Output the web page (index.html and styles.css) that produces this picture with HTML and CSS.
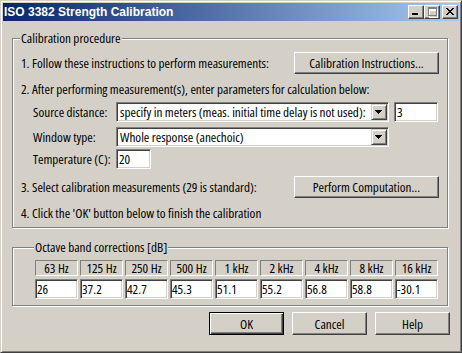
FILE: index.html
```html
<!DOCTYPE html>
<html>
<head>
<meta charset="utf-8">
<title>ISO 3382 Strength Calibration</title>
<link rel="stylesheet" href="styles.css">
</head>
<body>
<div class="window">
  <div class="titlebar">
    <span class="title">ISO 3382 Strength Calibration</span>
    <div class="caps">
      <span class="cap"><svg width="14" height="12" viewBox="0 0 14 12" shape-rendering="crispEdges"><rect x="3" y="7" width="6" height="2" fill="#000"/></svg></span>
      <span class="cap"><svg width="14" height="12" viewBox="0 0 14 12" shape-rendering="crispEdges"><path d="M4 3h9v9h-9z M5 5v6h7v-6z" fill="#fff" fill-rule="evenodd"/><path d="M3 1h9v9h-9z M4 3v6h7v-6z" fill="#808080" fill-rule="evenodd"/></svg></span>
      <span class="cap close"><svg width="14" height="12" viewBox="0 0 14 12" shape-rendering="crispEdges"><path transform="translate(3 2)" d="M0 0h2v1h-2z M6 0h2v1h-2z M1 1h2v1h-2z M5 1h2v1h-2z M2 2h4v1h-4z M3 3h2v1h-2z M2 4h4v1h-4z M1 5h2v1h-2z M5 5h2v1h-2z M0 6h2v1h-2z M6 6h2v1h-2z" fill="#000"/></svg></span>
    </div>
  </div>
  <div class="client">
    <fieldset class="group g1">
      <legend>Calibration procedure</legend>
      <div class="row r-btn first">
        <span>1. Follow these instructions to perform measurements:</span>
        <button class="btn wide">Calibration Instructions...</button>
      </div>
      <div class="row r-text">2. After performing measurement(s), enter parameters for calculation below:</div>
      <div class="field f-src">
        <span class="lbl">Source distance:</span>
        <div class="combo">
          <span class="ctext">specify in meters (meas. initial time delay is not used):</span>
          <span class="arrow"><svg width="14" height="14" viewBox="0 0 14 14" shape-rendering="crispEdges"><path d="M3 5h7v1h-1v1h-1v1h-1v1h-1v-1h-1v-1h-1v-1h-1z" fill="#000"/></svg></span>
        </div>
        <div class="edit e-dist">3</div>
      </div>
      <div class="field f-win">
        <span class="lbl">Window type:</span>
        <div class="combo">
          <span class="ctext">Whole response (anechoic)</span>
          <span class="arrow"><svg width="14" height="14" viewBox="0 0 14 14" shape-rendering="crispEdges"><path d="M3 5h7v1h-1v1h-1v1h-1v1h-1v-1h-1v-1h-1v-1h-1z" fill="#000"/></svg></span>
        </div>
      </div>
      <div class="field f-temp">
        <span class="lbl">Temperature (C):</span>
        <div class="edit e-temp">20</div>
      </div>
      <div class="row r-btn">
        <span>3. Select calibration measurements (29 is standard):</span>
        <button class="btn wide">Perform Computation...</button>
      </div>
      <div class="row r-text">4. Click the 'OK' button below to finish the calibration</div>
    </fieldset>
    <fieldset class="group g2">
      <legend>Octave band corrections [dB]</legend>
      <div class="bands heads">
        <span class="head">63 Hz</span>
        <span class="head">125 Hz</span>
        <span class="head">250 Hz</span>
        <span class="head">500 Hz</span>
        <span class="head">1 kHz</span>
        <span class="head">2 kHz</span>
        <span class="head">4 kHz</span>
        <span class="head">8 kHz</span>
        <span class="head">16 kHz</span>
      </div>
      <div class="bands vals">
        <div class="edit">26</div>
        <div class="edit">37.2</div>
        <div class="edit">42.7</div>
        <div class="edit">45.3</div>
        <div class="edit">51.1</div>
        <div class="edit">55.2</div>
        <div class="edit">56.8</div>
        <div class="edit">58.8</div>
        <div class="edit">-30.1</div>
      </div>
    </fieldset>
    <div class="actions">
      <button class="btn dlg default">OK</button>
      <button class="btn dlg">Cancel</button>
      <button class="btn dlg">Help</button>
    </div>
  </div>
</div>
</body>
</html>
```

FILE: styles.css
```css
* { box-sizing: border-box; }

body {
  margin: 0;
  background: #d4d0c8;
  font-family: "Open Sans", "Liberation Sans", sans-serif;
  font-stretch: 75%;
  font-size: 13.2px;
  color: #000;
}

.window {
  width: 462px;
  height: 353px;
  background: #d4d0c8;
  border: 1px solid;
  border-color: #d4d0c8 #404040 #404040 #d4d0c8;
  box-shadow: inset 1px 1px #fff, inset -1px -1px #808080;
  padding: 2px;
  display: flex;
  flex-direction: column;
}

.titlebar {
  height: 18px;
  flex: none;
  display: flex;
  align-items: center;
  padding: 0 1px 0 1px;
  background: linear-gradient(to right, #0a246a, #a6caf0);
}

.title {
  flex: 1;
  color: #fff;
  font-family: "Liberation Sans", Arial, sans-serif;
  font-stretch: normal;
  font-weight: bold;
  font-size: 12px;
  white-space: nowrap;
}

.caps {
  display: flex;
  align-items: center;
}

.cap {
  width: 16px;
  height: 14px;
  background: #d4d0c8;
  border: 1px solid;
  border-color: #fff #404040 #404040 #fff;
  box-shadow: inset -1px -1px #808080, inset 1px 1px #d4d0c8;
  display: block;
}

.cap svg { display: block; }

.cap.close { margin-left: 2px; }

.client {
  flex: 1;
  padding: 0 9px;
  display: flex;
  flex-direction: column;
}

.group {
  margin: 10px 0 0 0;
  width: 436px;
  min-width: 0;
  border: 1px solid #808080;
  box-shadow: inset 1px 1px #fff, 1px 1px #fff;
}

.group legend {
  padding: 0 1px;
  margin-left: -1px;
  line-height: 14px;
  background: #d4d0c8;
}

.g1 { padding: 0 8px 6px 8px; }

.g2 {
  margin-top: 12px;
  padding: 0 8px 6px 22px;
}

.row {
  display: flex;
  align-items: center;
  white-space: nowrap;
}

.r-btn {
  height: 22px;
  margin-top: 7px;
  justify-content: space-between;
}

.r-text {
  height: 16px;
  line-height: 16px;
  margin-top: 7px;
}

.btn {
  font: inherit;
  color: #000;
  background: #d4d0c8;
  border: 1px solid;
  border-color: #fff #404040 #404040 #fff;
  box-shadow: inset -1px -1px #808080, inset 1px 1px #d4d0c8;
  padding: 0;
  display: flex;
  align-items: center;
  justify-content: center;
}

.btn.wide {
  width: 145px;
  height: 22px;
}

.btn.dlg {
  width: 75px;
  height: 23px;
}

.btn.default {
  border-color: #000;
  box-shadow: inset 1px 1px #fff, inset -1px -1px #404040, inset -2px -2px #808080;
}

.field {
  display: flex;
  align-items: center;
  height: 20px;
  padding-left: 12px;
  white-space: nowrap;
}

.f-src { margin-top: 5px; }
.f-win { margin-top: 5px; }
.f-temp { margin-top: 2px; }

.lbl { width: 83px; flex: none; }

.combo {
  width: 273px;
  height: 20px;
  flex: none;
  display: flex;
  align-items: center;
  background: #fff;
  border: 1px solid;
  border-color: #808080 #fff #fff #808080;
  box-shadow: inset 1px 1px #404040, inset -1px -1px #d4d0c8;
  padding: 1px 1px 1px 3px;
}

.ctext {
  flex: 1;
  overflow: hidden;
  white-space: nowrap;
}

.arrow {
  width: 16px;
  height: 16px;
  flex: none;
  background: #d4d0c8;
  border: 1px solid;
  border-color: #d4d0c8 #404040 #404040 #d4d0c8;
  box-shadow: inset 1px 1px #fff, inset -1px -1px #808080;
}

.arrow svg { display: block; }

.edit {
  height: 20px;
  background: #fff;
  border: 1px solid;
  border-color: #808080 #fff #fff #808080;
  box-shadow: inset 1px 1px #404040, inset -1px -1px #d4d0c8;
  padding: 0 0 0 2px;
  line-height: 18px;
  white-space: nowrap;
  overflow: hidden;
}

.e-dist { width: 44px; margin-left: 5px; }
.e-temp { width: 35px; }

.bands {
  display: grid;
  grid-template-columns: repeat(9, 43px);
  column-gap: 2px;
}

.heads { margin-top: 6px; }

.head {
  height: 16px;
  line-height: 14px;
  text-align: center;
  border: 1px solid;
  border-color: #808080 #fff #fff #808080;
}

.vals { margin-top: 3px; }

.vals .edit { padding-left: 1px; }

.actions {
  display: flex;
  justify-content: flex-end;
  gap: 8px;
  margin-top: 6px;
}
```
